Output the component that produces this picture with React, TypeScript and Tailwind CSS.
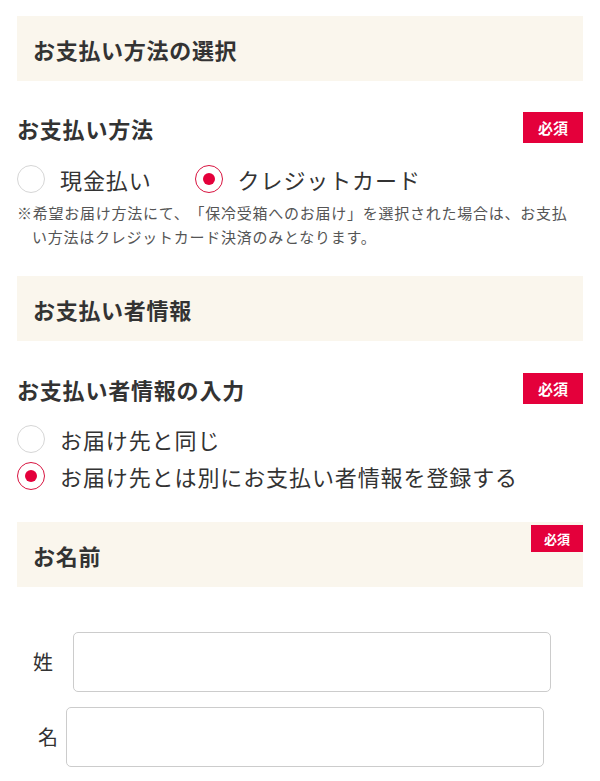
import React from 'react';

function Badge({ small = false }: { small?: boolean }) {
  return (
    <span
      className={
        small
          ? 'flex h-[27px] w-[52px] items-center justify-center bg-[#e4003b] text-[13px] font-bold leading-none text-white'
          : 'flex h-[31px] w-[60px] items-center justify-center bg-[#e4003b] text-[15px] font-bold leading-none text-white'
      }
    >
      必須
    </span>
  );
}

function Radio({ checked, label }: { checked?: boolean; label: string }) {
  return (
    <label className="flex h-[28px] items-center">
      <span
        className={
          checked
            ? 'flex h-[28px] w-[28px] shrink-0 items-center justify-center rounded-full border-[1.5px] border-[#d8133f] bg-white'
            : 'flex h-[28px] w-[28px] shrink-0 items-center justify-center rounded-full border-[1.5px] border-[#d6d6d6] bg-white'
        }
      >
        {checked && <span className="h-[12px] w-[12px] rounded-full bg-[#e4003b]" />}
      </span>
      <span className="ml-[15px] text-[22px] leading-none tracking-[0.9px] text-[#333]">{label}</span>
    </label>
  );
}

function SectionHeader({ title, children }: { title: string; children?: React.ReactNode }) {
  return (
    <div className="relative flex h-[65px] items-center bg-[#faf6ed] px-4">
      <h2 className="text-[22px] font-bold leading-none tracking-[0.7px] text-[#333]">{title}</h2>
      {children}
    </div>
  );
}

export default function App() {
  return (
    <div className="min-h-[781px] bg-white px-[17px] pt-[16px] font-['Noto_Sans_CJK_JP','Noto_Sans',sans-serif] text-[#333] [text-spacing-trim:space-all]">
      {/* 支払い方法 */}
      <SectionHeader title="お支払い方法の選択" />

      <div className="mt-[31px] flex items-center justify-between">
        <h3 className="text-[22px] font-bold leading-none tracking-[0.8px]">お支払い方法</h3>
        <Badge />
      </div>

      <div className="mt-[22px] flex items-center gap-[43px]">
        <Radio label="現金払い" />
        <Radio checked label="クレジットカード" />
      </div>

      <p className="mt-[8px] pl-[15px] pr-[10px] -indent-[15px] text-[15px] leading-[24px] tracking-[0.75px] text-[#555]">
        ※希望お届け方法にて、「保冷受箱へのお届け」を選択された場合は、お支払い方法はクレジットカード決済のみとなります。
      </p>

      {/* 支払い者情報 */}
      <div className="mt-[27px]">
        <SectionHeader title="お支払い者情報" />
      </div>

      <div className="mt-[32px] flex items-center justify-between">
        <h3 className="text-[22px] font-bold leading-none tracking-[0.8px]">お支払い者情報の入力</h3>
        <Badge />
      </div>

      <div className="mt-[21px] flex flex-col gap-[9px]">
        <Radio label="お届け先と同じ" />
        <Radio checked label="お届け先とは別にお支払い者情報を登録する" />
      </div>

      {/* 名前 */}
      <div className="mt-[32px]">
        <SectionHeader title="お名前">
          <div className="absolute right-0 top-[3px]">
            <Badge small />
          </div>
        </SectionHeader>
      </div>

      <div className="mt-[45px] flex items-center">
        <span className="ml-[16px] w-[20px] text-[20px] leading-none">姓</span>
        <input className="ml-[20px] h-[60px] w-[478px] rounded-[5px] border-[1.5px] border-[#cccccc] bg-white" />
      </div>
      <div className="mt-[15px] flex items-center">
        <span className="ml-[21px] w-[18px] text-[20px] leading-none">名</span>
        <input className="ml-[10px] h-[60px] w-[478px] rounded-[5px] border-[1.5px] border-[#cccccc] bg-white" />
      </div>
    </div>
  );
}
